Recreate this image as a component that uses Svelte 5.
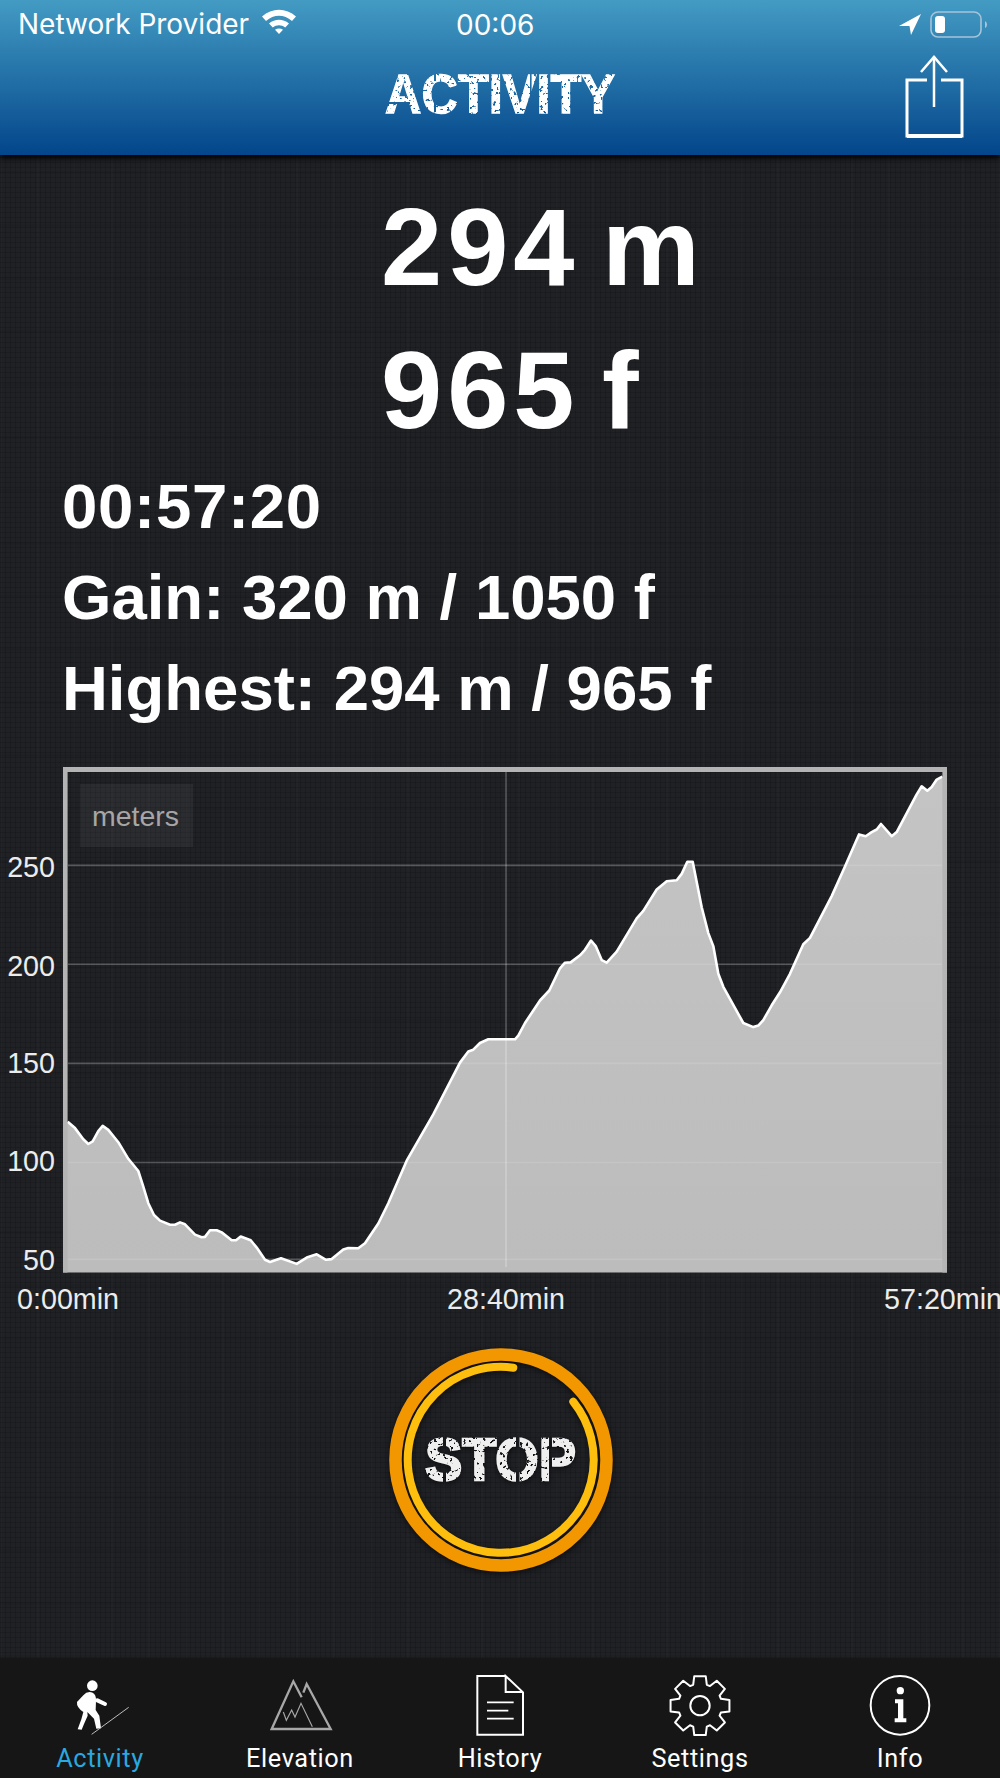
<script>
  const raw = [[203,1005],[225,1022],[250,1052],[265,1065],[278,1058],[295,1030],[308,1016],[325,1027],[355,1060],[385,1105],[415,1138],[430,1180],[445,1225],[462,1257],[480,1272],[510,1283],[525,1283],[540,1277],[555,1282],[585,1310],[605,1317],[615,1316],[630,1298],[650,1298],[665,1304],[695,1325],[708,1325],[722,1315],[752,1325],[770,1345],[795,1378],[810,1384],[843,1374],[890,1389],[920,1372],[950,1363],[978,1378],[995,1376],[1030,1350],[1045,1346],[1075,1347],[1095,1333],[1135,1280],[1165,1225],[1220,1110],[1300,985],[1380,845],[1405,815],[1420,810],[1440,792],[1465,782],[1545,782],[1555,772],[1575,738],[1620,677],[1648,650],[1680,590],[1695,575],[1712,574],[1740,555],[1755,540],[1773,515],[1787,530],[1805,568],[1820,575],[1850,545],[1910,455],[1930,435],[1970,377],[2000,355],[2030,352],[2045,335],[2062,302],[2078,302],[2105,425],[2125,495],[2140,530],[2155,605],[2170,640],[2230,738],[2260,749],[2275,745],[2290,730],[2315,690],[2340,655],[2370,605],[2410,525],[2430,508],[2495,395],[2535,315],[2577,228],[2597,233],[2615,222],[2630,215],[2643,200],[2675,233],[2690,222],[2750,120],[2765,98],[2782,110],[2795,100],[2810,80],[2827,72]];
  const top = 740;
  const pts = raw.map(([x, y]) => [+(x / 3).toFixed(1), +(750 - top + y / 2.703).toFixed(1)]);
  const line = pts.map((p, i) => (i ? 'L' : 'M') + p[0] + ' ' + p[1]).join(' ');
  const floorY = 1272.4 - top;
  const area = `M63 ${pts[0][1]} ${line.replace('M', 'L')} L947 ${pts[pts.length - 1][1]} L947 ${floorY} L63 ${floorY} Z`;
  const grid = [
    { label: '250', y: 865.4, base: 876.5 },
    { label: '200', y: 964.2, base: 975.7 },
    { label: '150', y: 1063.4, base: 1072.6 },
    { label: '100', y: 1162.5, base: 1171 },
    { label: '50', y: 1259.4, base: 1269.8 }
  ];
  const tabs = ['Activity', 'Elevation', 'History', 'Settings', 'Info'];

  function gearPath() {
    const cx = 655, cy = 167, out = 90, root = 66;
    const seg = [];
    for (let i = 0; i < 8; i++) {
      const a = (i * Math.PI) / 4 - Math.PI / 2;
      const p = (r, d) => {
        const t = a + (d * Math.PI) / 180;
        return (cx + r * Math.cos(t)).toFixed(1) + ' ' + (cy + r * Math.sin(t)).toFixed(1);
      };
      seg.push(p(root, -18), p(out, -11), p(out, 11), p(root, 18));
    }
    return 'M' + seg.join(' L') + ' Z';
  }
  const gear = gearPath();
</script>

<div class="page">
  <svg class="defs" width="0" height="0" aria-hidden="true">
    <defs>
      <filter id="distress" x="-5%" y="-5%" width="110%" height="110%">
        <feTurbulence type="fractalNoise" baseFrequency="0.3" numOctaves="2" seed="5" result="n" />
        <feColorMatrix in="n" type="matrix" values="0 0 0 0 0  0 0 0 0 0  0 0 0 0 0  0 0 0 -14 9.7" result="m" />
        <feComposite in="SourceGraphic" in2="m" operator="in" />
      </filter>
      <linearGradient id="fillArea" x1="0" y1="0" x2="0" y2="1">
        <stop offset="0" stop-color="#c4c4c4" />
        <stop offset="1" stop-color="#bcbcbc" />
      </linearGradient>
      <mask id="titleCuts" maskUnits="userSpaceOnUse" x="0" y="0" width="280" height="50">
        <rect width="280" height="50" fill="#fff" />
        <rect x="22" y="33" width="28" height="2" fill="#000" />
        <rect x="74" y="2" width="2" height="10" fill="#000" />
        <rect x="74" y="33" width="2" height="10" fill="#000" />
        <rect x="170" y="3" width="1.6" height="38" fill="#000" />
      </mask>
      <mask id="stopCuts" maskUnits="userSpaceOnUse" x="0" y="0" width="260" height="260">
        <rect width="260" height="260" fill="#fff" />
        <rect x="73" y="106" width="3" height="14" fill="#000" />
        <rect x="73" y="140" width="3" height="14" fill="#000" />
        <rect x="146" y="102" width="3.5" height="18" fill="#000" />
        <rect x="146" y="138" width="3.5" height="20" fill="#000" />
        <rect x="179" y="102" width="3" height="52" fill="#000" />
      </mask>
    </defs>
  </svg>

  <header class="nav">
    <div class="status">
      <div class="status-left">
        <span>Network Provider</span>
        <svg class="wifi" viewBox="0 0 38 27" width="38" height="27">
          <path d="M2 9.5 C12 0.5 26 0.5 36 9.5 L32 14 C24 7 14 7 6 14 Z" fill="#fff" />
          <path d="M9 16.5 C15 11.5 23 11.5 29 16.5 L25.2 20.6 C21.5 17.6 16.5 17.6 12.8 20.6 Z" fill="#fff" />
          <path d="M15 22.8 C17.5 21 20.5 21 23 22.8 L19 27 Z" fill="#fff" />
        </svg>
      </div>
      <span class="clock">00:06</span>
      <div class="status-right">
        <svg viewBox="0 0 22 21" width="22" height="21"><path d="M22 0 L0 12 L10.5 12 L12 21 Z" fill="#fff" /></svg>
        <svg viewBox="0 0 59 27" width="59" height="27">
          <rect x="1" y="1" width="50" height="25" rx="7" fill="none" stroke="#a6c4da" stroke-width="1.6" />
          <rect x="5" y="5" width="10" height="17" rx="3" fill="#fff" />
          <path d="M55 10 a4 4 0 0 1 0 7 Z" fill="#a6c4da" />
        </svg>
      </div>
    </div>
    <div class="titlebar">
      <svg class="title" viewBox="0 0 280 50" width="280" height="50" role="img" aria-label="ACTIVITY">
        <g mask="url(#titleCuts)">
          <text x="25" y="44" textLength="230" lengthAdjust="spacingAndGlyphs" filter="url(#distress)">ACTIVITY</text>
        </g>
      </svg>
      <svg class="share" viewBox="0 0 62 86" width="62" height="86">
        <path d="M24 25 H4 V81 H59 V25 H38" fill="none" stroke="#fff" stroke-width="3" />
        <path d="M4 81 H59" stroke="#fff" stroke-width="4" />
        <path d="M31 1.5 V52" stroke="#fff" stroke-width="2.5" />
        <path d="M18 17 L31 2 L44 17" fill="none" stroke="#fff" stroke-width="2.5" />
      </svg>
    </div>
  </header>

  <main class="main">
    <div class="big">294 m</div>
    <div class="big">965 f</div>
    <div class="stats">
      <div class="time">00:57:20</div>
      <div>Gain: 320 m / 1050 f</div>
      <div>Highest: 294 m / 965 f</div>
    </div>

    <svg class="chart" viewBox="0 0 1000 580" width="1000" height="580">
      <rect x="80" y={784 - top} width="113" height="63" fill="#fff" opacity="0.05" />
      <text class="unit" x="92" y={826 - top}>meters</text>
      {#each grid as g}
        <line x1="68" x2="942" y1={g.y - top} y2={g.y - top} stroke="#fff" stroke-opacity="0.15" stroke-width="1.6" />
      {/each}
      <path d={area} fill="url(#fillArea)" />
      {#each grid as g}
        <line x1="68" x2="942" y1={g.y - top} y2={g.y - top} stroke="#fff" stroke-opacity="0.12" stroke-width="1.6" />
        <text class="axis" x="55" y={g.base - top} text-anchor="end">{g.label}</text>
      {/each}
      <line x1="506" x2="506" y1={772 - top} y2={1267 - top} stroke="#fff" stroke-opacity="0.26" stroke-width="1.6" />
      <path d={line} fill="none" stroke="#fff" stroke-width="2.6" stroke-linejoin="round" />
      <path d="M63 {767 - top} H947 V{floorY} H942.4 V{772 - top} H67.6 V{floorY} H63 Z" fill="#b4b4b4" />
      <text class="axis" x="17" y={1308.6 - top}>0:00min</text>
      <text class="axis" x="447" y={1308.6 - top}>28:40min</text>
      <text class="axis" x="884" y={1308.6 - top}>57:20min</text>
    </svg>

    <div class="stop-wrap">
      <svg class="stop" viewBox="0 0 260 260" width="260" height="260" role="img" aria-label="STOP">
        <g transform="translate(131 130)">
          <circle r="105.5" fill="none" stroke="#f39700" stroke-width="12.5" />
          <path d="M72.3 -58.3 A93 93 0 1 1 12.3 -92.3" fill="none" stroke="#fdbe0d" stroke-width="8" stroke-linecap="round" />
        </g>
        <g mask="url(#stopCuts)">
          <text x="55" y="150" textLength="151" lengthAdjust="spacingAndGlyphs" filter="url(#distress)">STOP</text>
        </g>
      </svg>
    </div>
  </main>

  <nav class="tabs">
    {#each tabs as t, i}
      <div class="tab" class:on={i === 0}>
        {#if i === 0}
          <svg viewBox="195 66 210 192" width="70" height="64">
            <circle cx="277" cy="107" r="16" fill="#fff" />
            <path d="M250 136 Q262 122 278 128 Q289 134 288 152 L287 180 L298 197 L303 235 L289 236 L282 206 L262 186 L263 197 L252 222 L245 239 L233 238 L244 208 L250 186 Q229 172 231 156 Z" fill="#fff" />
            <path d="M292 151 L315 162" stroke="#fff" stroke-width="12" stroke-linecap="round" />
            <path d="M275 253 L386 172" stroke="#c9c9c9" stroke-width="2.8" />
          </svg>
        {:else if i === 1}
          <svg viewBox="795 66 210 192" width="70" height="64">
            <path d="M905 142 L880 94 L815 237 H992 L920 102 L910 128" fill="none" stroke="#a8a8a8" stroke-width="7" />
            <path d="M850 186 L859 211 L875 180 L885 201 L903 160 L937 230" fill="none" stroke="#a8a8a8" stroke-width="3.5" />
          </svg>
        {:else if i === 2}
          <svg viewBox="1392 66 210 192" width="70" height="64">
            <path d="M1514 78 H1429 V254 H1566 V127 L1514 78 V126 H1566" fill="none" stroke="#fff" stroke-width="6" />
            <path d="M1458 157 H1538 M1458 182 H1522 M1458 206 H1538" stroke="#fff" stroke-width="5.5" />
          </svg>
        {:else if i === 3}
          <svg viewBox="550 66 210 192" width="70" height="64">
            <path d={gear} fill="none" stroke="#fff" stroke-width="6" stroke-linejoin="round" />
            <circle cx="655" cy="167" r="29" fill="none" stroke="#fff" stroke-width="6" />
          </svg>
        {:else}
          <svg viewBox="1152 66 210 192" width="70" height="64">
            <circle cx="1257" cy="166" r="88" fill="none" stroke="#fff" stroke-width="6" />
            <circle cx="1258" cy="122" r="11" fill="#fff" />
            <path d="M1242 148 H1267 V205 H1276 V217 H1241 V205 H1251 V160 H1242 Z" fill="#fff" />
          </svg>
        {/if}
        <span>{t}</span>
      </div>
    {/each}
  </nav>
</div>

<style>
  :global(body) { margin: 0; background: #202125; }
  .page {
    width: 1000px;
    height: 1778px;
    display: flex;
    flex-direction: column;
    overflow: hidden;
    font-family: "Liberation Sans", Arial, sans-serif;
    color: #fff;
  }
  .defs { display: block; height: 0; }
  .nav {
    flex: 0 0 155px;
    height: 155px;
    background: linear-gradient(#439bc3, #03468b);
    box-shadow: 0 3px 6px #000;
    display: flex;
    flex-direction: column;
    z-index: 1;
    font-family: Inter, "Liberation Sans", sans-serif;
  }
  .status {
    height: 48px;
    position: relative;
    display: flex;
    justify-content: space-between;
    align-items: flex-start;
    padding: 0 11px 0 18px;
    font-size: 28px;
    line-height: 50px;
  }
  .status-left { display: flex; align-items: center; gap: 11px; height: 48px; }
  .wifi { margin-top: -7px; }
  .clock { position: absolute; left: 456px; top: 0; }
  .status-right { display: flex; align-items: flex-start; gap: 9px; padding-top: 11px; }
  .status-right svg:first-child { margin-top: 3px; }
  .titlebar { flex: 1; position: relative; display: flex; justify-content: center; }
  .title { margin-top: 21px; }
  .title text, .stop text {
    font-family: "Liberation Sans", sans-serif;
    font-weight: 700;
    fill: #fff;
    stroke: #fff;
    stroke-width: 1.4px;
    font-size: 55px;
  }
  .stop text { font-size: 60px; fill: #efefef; stroke: #efefef; stroke-width: 2.4px; }
  .share { position: absolute; right: 35px; top: 7px; }
  .main {
    flex: 1;
    min-height: 0;
    padding-top: 20px;
    background-color: #202125;
    background-image:
      repeating-linear-gradient(90deg, rgba(0,0,0,.14) 0 1px, transparent 1px 5px),
      repeating-linear-gradient(0deg, rgba(0,0,0,.14) 0 1px, transparent 1px 5px),
      repeating-linear-gradient(90deg, rgba(255,255,255,.012) 0 2px, transparent 2px 37px),
      repeating-linear-gradient(0deg, rgba(0,0,0,.05) 0 3px, transparent 3px 53px);
  }
  .big {
    font-size: 110px;
    line-height: 143px;
    font-weight: 700;
    padding-left: 381px;
    letter-spacing: 5px;
    word-spacing: -13px;
  }
  .stats {
    margin-top: 0;
    padding-left: 62px;
    font-size: 63.5px;
    line-height: 91px;
    font-weight: 700;
  }
  .time { letter-spacing: 0.7px; }
  .chart { display: block; margin-top: 6px; }
  .axis { font-size: 28.7px; fill: #ececec; }
  .unit { font-size: 28.5px; fill: #a6a6a6; }
  .stop-wrap { display: flex; justify-content: center; margin-top: 10px; }
  .stop { filter: drop-shadow(0 2px 3px rgba(0,0,0,.55)); }
  .tabs {
    flex: 0 0 120px;
    display: grid;
    grid-template-columns: repeat(5, 1fr);
    background: #161616;
  }
  .tab {
    display: flex;
    flex-direction: column;
    align-items: center;
    padding-top: 14px;
    font-family: Roboto, "Liberation Sans", sans-serif;
    font-size: 25.3px;
    letter-spacing: 0.6px;
    line-height: 30px;
  }
  .tab span { margin-top: 8px; }
  .tab.on span { color: #29a9e0; }
</style>
